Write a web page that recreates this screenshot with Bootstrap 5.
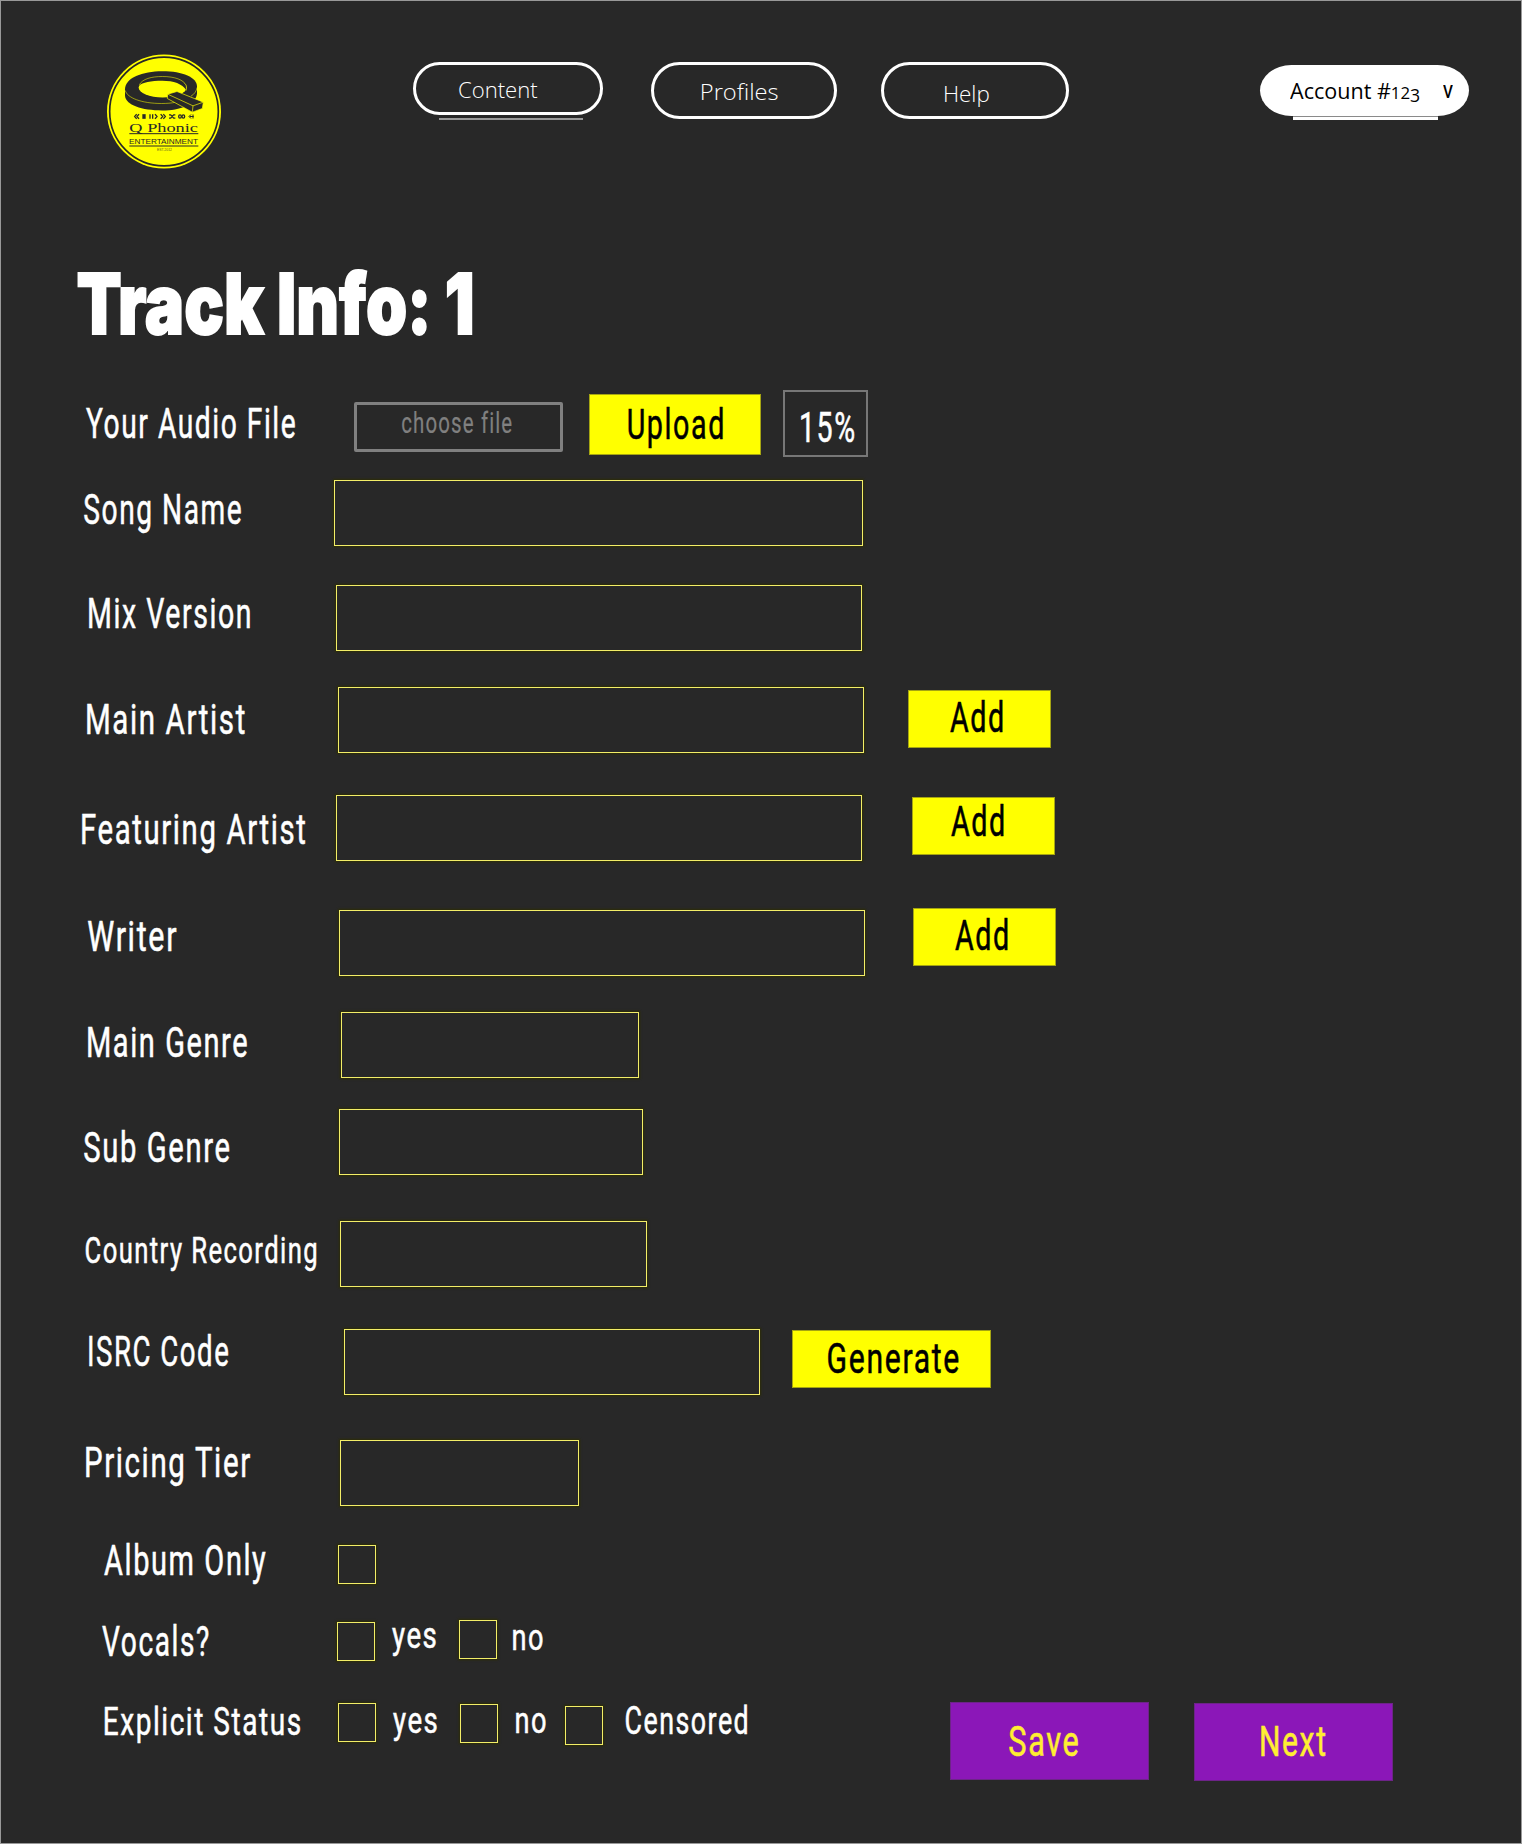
<!DOCTYPE html>
<html lang="en">
<head>
<meta charset="utf-8">
<meta name="viewport" content="width=device-width, initial-scale=1">
<title>Track Info</title>
<link href="https://cdn.jsdelivr.net/npm/bootstrap@5.3.0/dist/css/bootstrap.min.css" rel="stylesheet">
<style>
body{background:#282828;color:#fff;font-family:Roboto,"Liberation Sans",sans-serif;font-weight:400;line-height:1}
.page{width:1522px;height:1844px;overflow:hidden;outline:1px solid #999;outline-offset:-1px}
.fit{display:block;line-height:1;white-space:nowrap;flex:none;text-align:left}
.fit>span{display:inline-block;transform-origin:0 50%}

/* header */
.topbar{height:260px}
.brand{margin:54px 0 0 107px;width:114px;height:115px}
.pill{border:3px solid #fff;border-radius:30px;height:57px;margin-top:62px;padding:0;font:300 21.5px/1 "Open Sans","Noto Sans",sans-serif;color:#fff}
.wrap-content{width:190px;margin:62px 0 0 192px}
.wrap-content .pill{height:53px;width:190px;margin-top:0;padding:14px 0 0 43px}
.tab-line{width:144px;height:2px;background:#999;margin:3px 0 0 26px}
.pill-profiles{width:186px;margin-left:48px;padding:16px 0 0 48px}
.pill-help{width:188px;margin-left:44px;padding:18px 0 0 61px}
.wrap-account{width:209px;margin:65px 0 0 191px}
.account{height:51px;background:#fff;color:#000;border-radius:32px/26px;padding:15px 0 0 30px;font:400 21.5px/1 "Open Sans","Noto Sans",sans-serif}
.account .caret{font-family:Roboto,sans-serif;font-size:18.5px;font-weight:500;margin:3px 0 0 23px}
.account-line{width:145px;height:4px;margin-left:33px;background:#fff;border-top:1px solid #8a8a8a}
.old{font-size:.78em}
.old-low{font-size:.82em;position:relative;top:.17em}
.heading{height:130px;margin:0;padding:2px 0 0 78px;font:900 84px/1 Inter,Roboto,sans-serif;-webkit-text-stroke:1.8px #fff}

/* form rows */
.rowline>*{flex:none}
.rowline .fit{letter-spacing:.055em;-webkit-text-stroke:.55px currentColor}
.lbl{width:334px;font-size:42px}
.rowline .form-control{height:66px;width:526px;padding:0 12px;background:transparent;border:1px solid #f3ee68;color:#fff;box-shadow:0 0 2px 1px #2e2e05;font-size:32px}
.rowline .form-check-input{width:38px;height:39px;margin:0;background-color:transparent;border:1px solid #f3ee68;box-shadow:0 0 2px 1px #2e2e05}
.act{border:1px solid #a5a512;border-radius:0;background:#ff0;color:#000;font-size:43px;font-weight:400;line-height:1;padding:0;height:58px;text-align:left}
.add{width:143px}
.opt{font-size:37px}

#file{height:90px} #file .lbl{padding:13px 0 0 86px}
#file .choose{width:209px;height:50px;margin:12px 0 0 20px;border:3px solid gray;border-radius:2px;background:none;color:gray;font-size:29px;line-height:1;padding:4px 0 0 45px}
#file .choose .fit{-webkit-text-stroke-width:.2px}
#file .act{width:172px;height:61px;margin:4px 0 0 26px;padding:8px 0 0 38px}
#file .percent{width:85px;height:67px;margin-left:22px;border:2px solid #777;font-size:42px;padding:15px 0 0 16px}
#song{height:105px} #song .lbl{padding:9px 0 0 84px} #song .form-control{width:529px}
#mix{height:102px} #mix .lbl{padding:8px 0 0 89px} #mix .form-control{margin-left:2px}
#artist{height:108px} #artist .lbl{padding:12px 0 0 87px} #artist .form-control{margin-left:4px}
#artist .act{margin:3px 0 0 44px;padding:5px 0 0 41px}
#feat{height:113px} #feat .lbl{padding:14px 0 0 82px} #feat .form-control{margin-left:2px}
#feat .act{margin:2px 0 0 50px;padding:2px 0 0 38px}
#writer{height:104px} #writer .lbl{padding:8px 0 0 88px} #writer .form-control{margin:2px 0 0 5px}
#writer .act{margin:0 0 0 48px;padding:5px 0 0 41px}
#genre{height:97px} #genre .lbl{padding:10px 0 0 88px} #genre .form-control{margin-left:7px;width:298px}
#sub{height:112px} #sub .lbl{padding:18px 0 0 84px} #sub .form-control{margin-left:5px;width:304px}
#country{height:108px} #country .lbl{padding:12px 0 0 86px;font-size:36.5px} #country .form-control{margin-left:6px;width:307px}
#isrc{height:111px} #isrc .lbl{padding:2px 0 0 89px} #isrc .form-control{margin-left:10px;width:416px}
#isrc .act{width:199px;margin:1px 0 0 32px;padding:6px 0 0 35px}
#pricing{height:105px} #pricing .lbl{padding:2px 0 0 86px} #pricing .form-control{margin-left:6px;width:239px}
#album{height:75px} #album .lbl{margin-top:-5px;padding-left:104px} #album .form-check-input{margin-left:4px}
#vocals{height:82px} #vocals .lbl{padding:1px 0 0 102px}
#vocals .c1{margin:2px 0 0 3px} #vocals .o1{margin:-3px 0 0 17px} #vocals .c2{margin-left:23px} #vocals .o2{margin:-1px 0 0 16px}
#explicit{height:142px} #explicit .lbl{padding:1px 0 0 105px;font-size:39px}
#explicit .c1{margin:1px 0 0 4px} #explicit .o1{margin:0 0 0 17px} #explicit .c2{margin:2px 0 0 23px}
#explicit .o2{margin:0 0 0 18px} #explicit .c3{margin:4px 0 0 19px} #explicit .o3{margin:0 0 0 23px;font-size:38px}
#explicit .go{width:199px;height:78px;background:#8b17b8;color:#ffee32;border-color:#6d2488}
#explicit .go-save{margin-left:203px;padding:17px 0 0 58px}
#explicit .go-next{margin:1px 0 0 45px;padding:16px 0 0 66px}
</style>
</head>
<body>
<div class="page">
  <header class="topbar d-flex align-items-start">
    <svg class="brand flex-shrink-0" viewBox="36 27 342 344" role="img" aria-label="Q Phonic Entertainment">
      <circle cx="207" cy="199" r="171" fill="#ff0"/>
      <circle cx="207" cy="199" r="163" fill="none" stroke="#282828" stroke-width="5"/>
      <path fill="#282828" d="M90 132C90 98 142 78 202 78C264 78 306 96 306 124V144C304 178 254 196 202 196C140 196 92 180 90 152Z"/>
      <ellipse cx="203" cy="127" rx="72" ry="30" fill="#ff0"/>
      <path fill="#282828" d="M132 122C138 104 164 94 202 94C242 94 268 106 274 124V136C262 116 236 107 202 107C168 107 142 112 132 122Z"/>
      <path fill="none" stroke="#ff0" stroke-width="1.6" d="M133 119C142 101 170 94 202 94C240 94 266 104 274 121V136M91 136C96 158 140 175 200 175C214 175 230 174 243 171M306 127C305 137 298 147 288 153"/>
      <path fill="#282828" stroke="#ff0" stroke-width="2" stroke-linejoin="round" d="M218 147L246 139L325 171L322 190L292 201L217 160Z"/>
      <path fill="none" stroke="#ff0" stroke-width="2" d="M218 147L294 182L325 171M294 182L292 201"/>
      <g fill="none" stroke="#282828" stroke-width="4">
        <path d="M125 207L119 214L125 221M132 207L126 214L132 221M165 207V221M173 207V221M180 207L186 214L180 221M197 207L203 214L197 221M205 207L211 214L205 221M222 209H227L236 219H241M222 219H227L236 209H241"/>
        <path d="M147 207V221" stroke-width="10"/>
        <ellipse cx="255" cy="214" rx="4" ry="5"/><ellipse cx="265" cy="214" rx="4" ry="5"/>
        <path d="M288 208L282 214L288 220M284 214H296M294 208V220" stroke-width="3"/>
      </g>
      <g fill="#282828">
        <text x="103" y="260" font-family="Liberation Serif" font-size="37" textLength="206" lengthAdjust="spacingAndGlyphs">Q Phonic</text>
        <rect x="103" y="264" width="207" height="3"/>
        <text x="102" y="297" font-family="Liberation Sans" font-size="22" textLength="207" lengthAdjust="spacingAndGlyphs">ENTERTAINMENT</text>
        <rect x="103" y="301" width="207" height="3"/>
        <text x="186" y="318" font-family="Liberation Sans" font-size="11" opacity=".75" textLength="45" lengthAdjust="spacingAndGlyphs">EST.2012</text>
      </g>
    </svg>
    <nav class="d-flex align-items-start">
      <div class="wrap-content">
        <a href="#" class="pill d-block text-decoration-none"><span class="fit" data-w="79">Content</span></a>
        <div class="tab-line"></div>
      </div>
      <a href="#" class="pill pill-profiles d-block text-decoration-none"><span class="fit" data-w="77">Profiles</span></a>
      <a href="#" class="pill pill-help d-block text-decoration-none"><span class="fit" data-w="44">Help</span></a>
    </nav>
    <div class="wrap-account">
      <div class="account d-flex align-items-start">
        <span class="fit" data-w="130">Account #<span class="old">12</span><span class="old-low">3</span></span>
        <span class="fit caret" data-w="10">V</span>
      </div>
      <div class="account-line"></div>
    </div>
  </header>

  <h1 class="heading"><span class="fit" data-w="394">Track Info: 1</span></h1>

  <form>
    <div id="file" class="rowline d-flex align-items-start">
      <label class="lbl"><span class="fit" data-w="209">Your Audio File</span></label>
      <button type="button" class="choose d-flex align-items-start"><span class="fit" data-w="110">choose file</span></button>
      <button type="button" class="btn act d-flex align-items-start"><span class="fit" data-w="95">Upload</span></button>
      <div class="percent"><span class="fit" data-w="53">15%</span></div>
    </div>
    <div id="song" class="rowline d-flex align-items-start">
      <label class="lbl"><span class="fit" data-w="157">Song Name</span></label>
      <input class="form-control rounded-0" type="text">
    </div>
    <div id="mix" class="rowline d-flex align-items-start">
      <label class="lbl"><span class="fit" data-w="161">Mix Version</span></label>
      <input class="form-control rounded-0" type="text">
    </div>
    <div id="artist" class="rowline d-flex align-items-start">
      <label class="lbl"><span class="fit" data-w="158">Main Artist</span></label>
      <input class="form-control rounded-0" type="text">
      <button type="button" class="btn act add d-flex align-items-start"><span class="fit" data-w="53">Add</span></button>
    </div>
    <div id="feat" class="rowline d-flex align-items-start">
      <label class="lbl"><span class="fit" data-w="223">Featuring Artist</span></label>
      <input class="form-control rounded-0" type="text">
      <button type="button" class="btn act add d-flex align-items-start"><span class="fit" data-w="53">Add</span></button>
    </div>
    <div id="writer" class="rowline d-flex align-items-start">
      <label class="lbl"><span class="fit" data-w="88">Writer</span></label>
      <input class="form-control rounded-0" type="text">
      <button type="button" class="btn act add d-flex align-items-start"><span class="fit" data-w="53">Add</span></button>
    </div>
    <div id="genre" class="rowline d-flex align-items-start">
      <label class="lbl"><span class="fit" data-w="159">Main Genre</span></label>
      <input class="form-control rounded-0" type="text">
    </div>
    <div id="sub" class="rowline d-flex align-items-start">
      <label class="lbl"><span class="fit" data-w="145">Sub Genre</span></label>
      <input class="form-control rounded-0" type="text">
    </div>
    <div id="country" class="rowline d-flex align-items-start">
      <label class="lbl"><span class="fit" data-w="230">Country Recording</span></label>
      <input class="form-control rounded-0" type="text">
    </div>
    <div id="isrc" class="rowline d-flex align-items-start">
      <label class="lbl"><span class="fit" data-w="139">ISRC Code</span></label>
      <input class="form-control rounded-0" type="text">
      <button type="button" class="btn act d-flex align-items-start"><span class="fit" data-w="131">Generate</span></button>
    </div>
    <div id="pricing" class="rowline d-flex align-items-start">
      <label class="lbl"><span class="fit" data-w="164">Pricing Tier</span></label>
      <input class="form-control rounded-0" type="text">
    </div>
    <div id="album" class="rowline d-flex align-items-start">
      <label class="lbl"><span class="fit" data-w="162">Album Only</span></label>
      <input class="form-check-input rounded-0" type="checkbox">
    </div>
    <div id="vocals" class="rowline d-flex align-items-start">
      <label class="lbl"><span class="fit" data-w="107">Vocals?</span></label>
      <input class="form-check-input rounded-0 c1" type="checkbox">
      <span class="fit opt o1" data-w="44">yes</span>
      <input class="form-check-input rounded-0 c2" type="checkbox">
      <span class="fit opt o2" data-w="30">no</span>
    </div>
    <div id="explicit" class="rowline d-flex align-items-start">
      <label class="lbl"><span class="fit" data-w="195">Explicit Status</span></label>
      <input class="form-check-input rounded-0 c1" type="checkbox">
      <span class="fit opt o1" data-w="44">yes</span>
      <input class="form-check-input rounded-0 c2" type="checkbox">
      <span class="fit opt o2" data-w="30">no</span>
      <input class="form-check-input rounded-0 c3" type="checkbox">
      <span class="fit opt o3" data-w="121">Censored</span>
      <button type="button" class="btn act go go-save d-flex align-items-start"><span class="fit" data-w="69">Save</span></button>
      <button type="button" class="btn act go go-next d-flex align-items-start"><span class="fit" data-w="64">Next</span></button>
    </div>
  </form>
</div>
<script src="https://cdn.jsdelivr.net/npm/bootstrap@5.3.0/dist/js/bootstrap.bundle.min.js"></script>
<script>
// Condense each label so that its inked width equals data-w.
const pen = document.createElement('canvas').getContext('2d');
document.querySelectorAll('.fit').forEach(el => {
  const inner = document.createElement('span');
  while (el.firstChild) inner.append(el.firstChild);
  el.append(inner);
  const want = +el.dataset.w, cs = getComputedStyle(el), text = inner.textContent;
  el.style.width = want + 'px';
  pen.font = `${cs.fontWeight} ${cs.fontSize} ${cs.fontFamily}`;
  const left = -pen.measureText(text[0]).actualBoundingBoxLeft;
  const last = pen.measureText(text.slice(-1));
  const right = last.width - last.actualBoundingBoxRight + (parseFloat(cs.letterSpacing) || 0);
  const k = want / (inner.offsetWidth - left - right);
  inner.style.transform = `translateX(${-left * k}px) scaleX(${k})`;
});
</script>
</body>
</html>
